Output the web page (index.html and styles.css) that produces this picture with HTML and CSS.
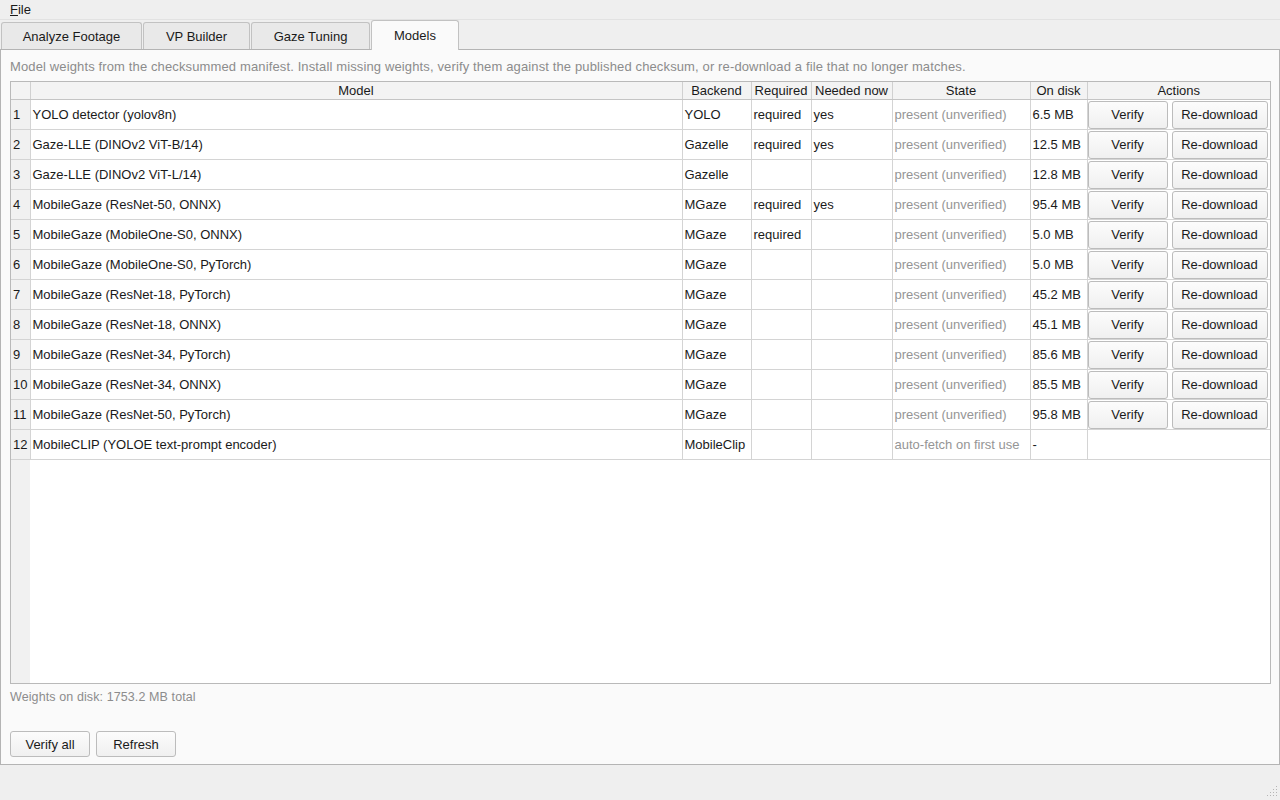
FILE: index.html
```html
<!DOCTYPE html>
<html>
<head>
  <title>Models</title>
  <link rel="stylesheet" href="styles.css">
</head>
<body>
  <div class="menubar">
    <span class="menu-item"><u>F</u>ile</span>
  </div>

  <div class="tabbar">
    <div class="tab">Analyze Footage</div>
    <div class="tab tab-vp">VP Builder</div>
    <div class="tab tab-gaze">Gaze Tuning</div>
    <div class="tab tab-models active">Models</div>
  </div>

  <div class="panel">
    <p class="hint">Model weights from the checksummed manifest. Install missing weights, verify them against the published checksum, or re-download a file that no longer matches.</p>

    <div class="table-frame">
      <table class="models">
        <colgroup>
          <col class="c-num">
          <col class="c-model">
          <col class="c-backend">
          <col class="c-req">
          <col class="c-needed">
          <col class="c-state">
          <col class="c-disk">
          <col class="c-actions">
        </colgroup>
        <thead>
          <tr>
            <th></th>
            <th>Model</th>
            <th>Backend</th>
            <th>Required</th>
            <th>Needed now</th>
            <th>State</th>
            <th>On disk</th>
            <th>Actions</th>
          </tr>
        </thead>
        <tbody id="rows"></tbody>
      </table>
    </div>

    <p class="total">Weights on disk: 1753.2 MB total</p>

    <div class="bottom-buttons">
      <button class="btn btn-wide">Verify all</button>
      <button class="btn btn-wide">Refresh</button>
    </div>
  </div>

  <div class="grip">
    <svg width="12" height="12" viewBox="0 0 12 12">
      <g fill="#b5b5b5">
        <rect x="10" y="0" width="1" height="1"/>
        <rect x="7" y="3" width="1" height="1"/><rect x="10" y="3" width="1" height="1"/>
        <rect x="4" y="6" width="1" height="1"/><rect x="7" y="6" width="1" height="1"/><rect x="10" y="6" width="1" height="1"/>
        <rect x="1" y="9" width="1" height="1"/><rect x="4" y="9" width="1" height="1"/><rect x="7" y="9" width="1" height="1"/><rect x="10" y="9" width="1" height="1"/>
      </g>
    </svg>
  </div>

  <script>
    const models = [
      ['YOLO detector (yolov8n)', 'YOLO', 'required', 'yes', 'present (unverified)', '6.5 MB', true],
      ['Gaze-LLE (DINOv2 ViT-B/14)', 'Gazelle', 'required', 'yes', 'present (unverified)', '12.5 MB', true],
      ['Gaze-LLE (DINOv2 ViT-L/14)', 'Gazelle', '', '', 'present (unverified)', '12.8 MB', true],
      ['MobileGaze (ResNet-50, ONNX)', 'MGaze', 'required', 'yes', 'present (unverified)', '95.4 MB', true],
      ['MobileGaze (MobileOne-S0, ONNX)', 'MGaze', 'required', '', 'present (unverified)', '5.0 MB', true],
      ['MobileGaze (MobileOne-S0, PyTorch)', 'MGaze', '', '', 'present (unverified)', '5.0 MB', true],
      ['MobileGaze (ResNet-18, PyTorch)', 'MGaze', '', '', 'present (unverified)', '45.2 MB', true],
      ['MobileGaze (ResNet-18, ONNX)', 'MGaze', '', '', 'present (unverified)', '45.1 MB', true],
      ['MobileGaze (ResNet-34, PyTorch)', 'MGaze', '', '', 'present (unverified)', '85.6 MB', true],
      ['MobileGaze (ResNet-34, ONNX)', 'MGaze', '', '', 'present (unverified)', '85.5 MB', true],
      ['MobileGaze (ResNet-50, PyTorch)', 'MGaze', '', '', 'present (unverified)', '95.8 MB', true],
      ['MobileCLIP (YOLOE text-prompt encoder)', 'MobileClip', '', '', 'auto-fetch on first use', '-', false],
    ];

    let html = '';
    models.forEach((m, i) => {
      const actions = m[6]
        ? '<div class="actions"><button class="btn btn-verify">Verify</button><button class="btn btn-redl">Re-download</button></div>'
        : '';
      html += `
        <tr>
          <td class="num">${i + 1}</td>
          <td>${m[0]}</td>
          <td>${m[1]}</td>
          <td>${m[2]}</td>
          <td>${m[3]}</td>
          <td class="state">${m[4]}</td>
          <td>${m[5]}</td>
          <td class="act">${actions}</td>
        </tr>
      `;
    });
    document.getElementById('rows').innerHTML = html;
  </script>
</body>
</html>
```

FILE: styles.css
```css
body {
  margin: 0;
  width: 1280px;
  height: 800px;
  background: #efefef;
  font-family: "Liberation Sans", Arial, sans-serif;
  font-size: 13px;
  color: #1a1a1a;
  position: relative;
  overflow: hidden;
}
.menubar {
  height: 19px;
  border-bottom: 1px solid #e2e2e2;
  display: flex;
  align-items: center;
  padding-left: 10px;
}
.menu-item {
  font-size: 13px;
  line-height: 19px;
}
.tabbar {
  display: flex;
  align-items: flex-end;
  height: 29px;
  padding-left: 1px;
}
.tab {
  width: 141px;
  height: 27px;
  margin-right: 1px;
  border: 1px solid #c2c2c2;
  border-bottom: none;
  border-radius: 3px 3px 0 0;
  background: #e9e9e9;
  display: flex;
  align-items: center;
  justify-content: center;
  padding-top: 1px;
  box-sizing: border-box;
}
.tab-vp {
  width: 107px;
}
.tab-gaze {
  width: 119px;
}
.tab-models {
  width: 88px;
}
.tab.active {
  height: 30px;
  background: #fafafa;
  padding-top: 0;
  padding-bottom: 1px;
  position: relative;
  margin-bottom: -1px;
  z-index: 2;
}
.panel {
  height: 716px;
  box-sizing: border-box;
  border: 1px solid #b4b4b4;
  background: #fafafa;
  padding: 8px 8px 0 9px;
  position: relative;
}
.hint {
  margin: 0;
  color: #8c8c8c;
  font-size: 13px;
  letter-spacing: 0.13px;
  line-height: 17px;
  height: 23px;
}
.table-frame {
  height: 603px;
  box-sizing: border-box;
  border: 1px solid #b9b9b9;
  background: linear-gradient(to right, #f1f1f1 19px, #ffffff 19px);
  overflow: hidden;
}
.models {
  border-collapse: collapse;
  table-layout: fixed;
  width: 1259px;
}
.c-num { width: 19px; }
.c-model { width: 652px; }
.c-backend { width: 69px; }
.c-req { width: 60px; }
.c-needed { width: 81px; }
.c-state { width: 138px; }
.c-disk { width: 57px; }
.c-actions { width: 183px; }
.models th {
  height: 17px;
  font-weight: normal;
  background: #f3f3f3;
  border-left: 1px solid #d0d0d0;
  border-bottom: 1px solid #c4c4c4;
  text-align: center;
  padding: 0;
  line-height: 17px;
}
.models th:first-child {
  border-left: none;
}
.models td {
  height: 29px;
  padding: 0 2px;
  border-left: 1px solid #d4d4d4;
  border-bottom: 1px solid #d4d4d4;
  white-space: nowrap;
  overflow: hidden;
}
.models td:first-child {
  border-left: none;
}
.models td.num {
  background: #f1f1f1;
  padding-left: 2px;
  padding-right: 0;
}
.models td.state {
  color: #959595;
}
.models td.act {
  padding: 0;
}
.actions {
  display: flex;
  gap: 4px;
}
.btn {
  font-family: "Liberation Sans", Arial, sans-serif;
  font-size: 13px;
  color: #1a1a1a;
  height: 28px;
  border: 1px solid #bcbcbc;
  border-radius: 3px;
  background: linear-gradient(#fcfcfc, #f0f0f0);
  padding: 0;
}
.btn-verify {
  width: 80px;
}
.btn-redl {
  width: 96px;
}
.total {
  margin: 0;
  color: #8c8c8c;
  font-size: 12.5px;
  letter-spacing: 0.1px;
  line-height: 16px;
  padding-top: 5px;
  height: 42px;
}
.bottom-buttons {
  display: flex;
  gap: 6px;
}
.btn-wide {
  width: 80px;
  height: 26px;
}
.grip {
  position: absolute;
  right: 2px;
  bottom: 2px;
  width: 12px;
  height: 12px;
}
```
